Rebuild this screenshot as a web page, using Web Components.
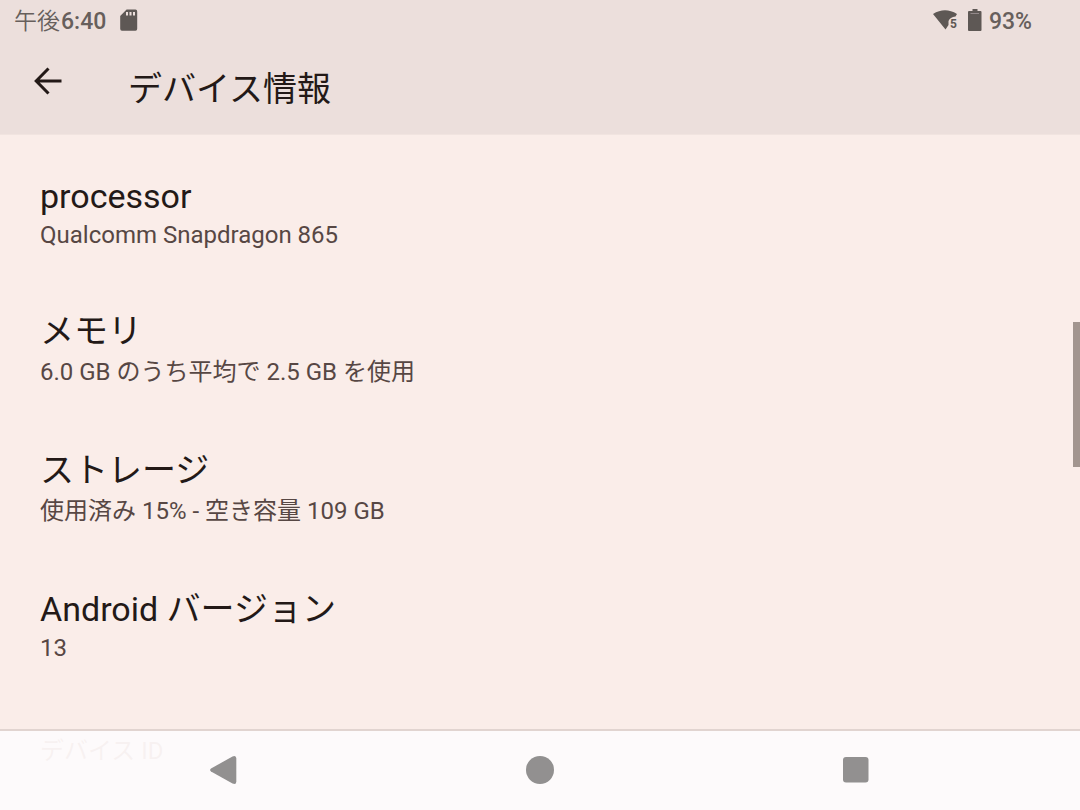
<!DOCTYPE html>
<html lang="ja">
<head>
<meta charset="utf-8">
<meta name="viewport" content="width=device-width, initial-scale=1">
<title>デバイス情報</title>
<style>
  html, body { margin: 0; height: 100%; }
  body {
    font-family: Roboto, "Noto Sans CJK JP", sans-serif;
    background: #faede9;
    color: #231917;
  }
</style>
</head>
<body>
<device-info-page></device-info-page>

<script>
const define = (name, markup) => {
  const template = document.createElement('template');
  template.innerHTML = markup;
  customElements.define(name, class extends HTMLElement {
    constructor() {
      super();
      this.attachShadow({ mode: 'open' }).append(template.content.cloneNode(true));
    }
  });
};

define('status-bar', `
  <style>
    :host { display: flex; justify-content: space-between; align-items: center;
            height: 40px; padding: 0 48px 0 14px; box-sizing: border-box;
            font-size: 23px; line-height: 28px; color: #675f5c; }
    .group { display: flex; align-items: center; }
    .start { gap: 14px; }
    .end { gap: 7px; }
    .wifi { margin-right: 3px; }
    svg { display: block; fill: #5e5855; }
    time, .level { padding-top: 4px; }
    .latin, .level { font-weight: 500; }
    .cjk { font-weight: 350; padding-right: 1px; }
  </style>
  <div class="group start">
    <time datetime="18:40"><span class="cjk">午後</span><span class="latin">6:40</span></time>
    <svg width="18" height="22" viewBox="0 0 18 22" aria-hidden="true">
      <path fill-rule="evenodd" d="M6.600 .5H15.500Q17.200 .5 17.200 2.500V19.800Q17.200 21.800 15.500 21.800H2Q.2 21.800 .2 19.800V7ZM6 3V6.500H8V3ZM9.500 3V6.500H11.500V3ZM13 3V6.500H15V3Z"/>
    </svg>
  </div>
  <div class="group end">
    <svg class="wifi" width="25" height="20" viewBox="0 0 25 20" role="img" aria-label="Wi-Fi 5">
      <path d="M0 4Q12-3.500 24 4L22.500 6.500Q17 7 15.500 11V15L12.500 19.500Z"/>
      <text x="17" y="18" font-size="12" font-weight="700">5</text>
    </svg>
    <svg width="14" height="22" viewBox="0 0 14 22" aria-hidden="true">
      <path d="M4.500 0H9.500V2H12.500Q13.500 2 13.500 3V21Q13.500 22 12.500 22H1Q0 22 0 21V3Q0 2 1 2H4.500Z"/>
      <path d="M2.500 4.500H11" stroke="#93898a" stroke-width="1"/>
    </svg>
    <span class="level">93%</span>
  </div>
`);

define('app-header', `
  <style>
    :host { display: block; background: #ecdfdc; border-bottom: 1px solid #f1e4e0; }
    .bar { display: flex; align-items: flex-start; gap: 60px;
           padding: 21px 28px; }
    button { display: block; border: 0; padding: 6px; background: none; color: #231917; }
    svg { display: block; fill: none; stroke: currentColor; stroke-width: 3; }
    h1 { margin: 0; padding-top: 4px; font-size: 34px; line-height: 48px; font-weight: 400; }
  </style>
  <slot name="status"></slot>
  <div class="bar">
    <button type="button" aria-label="戻る">
      <svg width="28" height="28" viewBox="0 0 28 28"><path d="M14.500 1.500L2.200 14L14.500 26.500M2.200 14H27.500"/></svg>
    </button>
    <h1><slot></slot></h1>
  </div>
`);

define('info-row', `
  <style>
    :host { display: block; padding: 32px 40px 30px; }
    .title { font-size: 34px; line-height: 40px; }
    .summary { margin-top: 5px; font-size: 24px; line-height: 28px; color: #574744; }
    :host([lang="ja"]) .summary { line-height: 32px; }
  </style>
  <div class="title"><slot></slot></div>
  <div class="summary"><slot name="summary"></slot></div>
`);

define('info-category', `
  <style>
    :host { display: block; padding: 41px 40px 28px; font-size: 24px; line-height: 36px; color: #9c5a48; }
  </style>
  <slot></slot>
`);

define('scroll-thumb', `
  <style>
    :host { display: block; position: fixed; right: 0; top: 322px; width: 7px; height: 145px;
            background: #a2958f; }
  </style>
`);

define('navigation-bar', `
  <style>
    :host { position: fixed; inset: auto 0 0 0; display: grid;
            grid-template-columns: repeat(3, 1fr); padding: 0 66px 2px; height: 81px;
            box-sizing: border-box; background: rgba(253, 251, 252, .94);
            border-top: 2px solid #e1d4d0; }
    button { display: grid; place-items: center; border: 0; padding: 0; background: none; }
    svg { display: block; fill: #929090; }
  </style>
  <button type="button" aria-label="戻る">
    <svg width="28" height="30" viewBox="0 0 28 30"><path d="M1 13.500L22.500 1.400Q26.300-.2 26.300 3.500V26.500Q26.300 30.200 22.500 28.600L1 16.500Q-.8 15 1 13.500Z"/></svg>
  </button>
  <button type="button" aria-label="ホーム">
    <svg width="28" height="28" viewBox="0 0 28 28"><circle cx="14" cy="14" r="14"/></svg>
  </button>
  <button type="button" aria-label="最近使ったアプリ">
    <svg width="26" height="26" viewBox="0 0 26 26"><rect width="25.500" height="25.500" rx="3"/></svg>
  </button>
`);

define('device-info-page', `
  <style>
    :host { display: block; height: 100%; overflow: hidden; }
    main { padding-top: 9px; }
  </style>
  <app-header><status-bar slot="status"></status-bar>デバイス情報</app-header>
  <main>
    <info-row>processor<span slot="summary">Qualcomm Snapdragon 865</span></info-row>
    <info-row lang="ja">メモリ<span slot="summary">6.0 GB のうち平均で 2.5 GB を使用</span></info-row>
    <info-row lang="ja">ストレージ<span slot="summary">使用済み 15% - 空き容量 109 GB</span></info-row>
    <info-row>Android バージョン<span slot="summary">13</span></info-row>
    <info-category>デバイス ID</info-category>
  </main>
  <scroll-thumb></scroll-thumb>
  <navigation-bar></navigation-bar>
`);
</script>
</body>
</html>
